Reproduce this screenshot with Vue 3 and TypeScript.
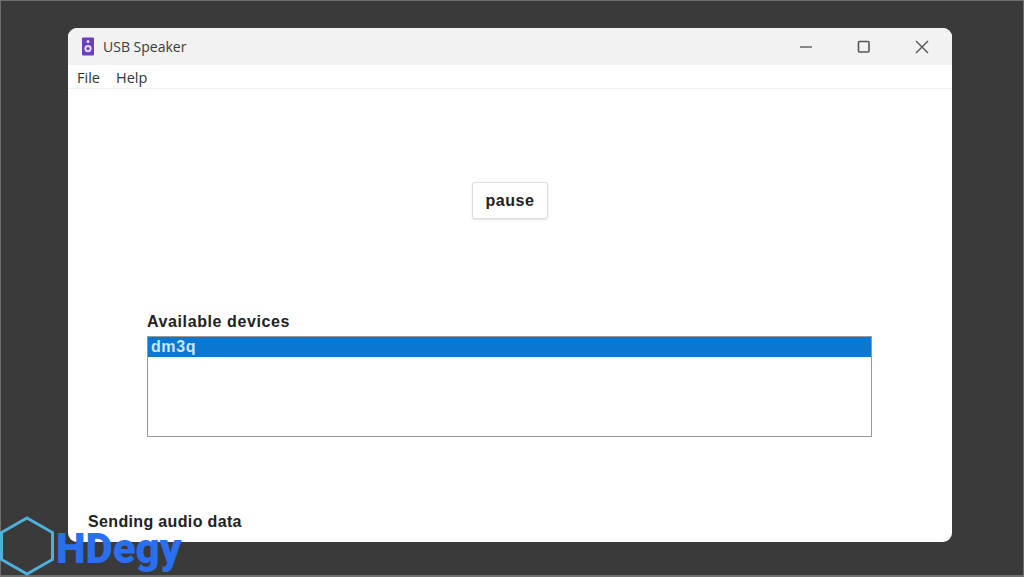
<template>
  <div class="screen">
    <div class="window">
      <header class="title-bar">
        <div class="title-left">
          <svg class="app-icon" width="14" height="19" viewBox="0 0 14 19">
            <rect x="1" y="0.5" width="12" height="18" rx="1" fill="#6a3fc0" />
            <circle cx="7" cy="4.6" r="1.5" fill="#e6dcf8" />
            <circle cx="7" cy="11.6" r="3.6" fill="#e6dcf8" />
            <circle cx="7" cy="11.6" r="1.6" fill="#6a3fc0" />
          </svg>
          <span class="app-name">{{ title }}</span>
        </div>
        <div class="window-controls">
          <svg width="14" height="14" viewBox="0 0 14 14">
            <path d="M1 7H13" stroke="#666" stroke-width="1.3" fill="none" />
          </svg>
          <svg width="14" height="14" viewBox="0 0 14 14">
            <rect x="1.500" y="1.500" width="10.500" height="10.500" rx="1" stroke="#555" stroke-width="1.6" fill="none" />
          </svg>
          <svg width="14" height="14" viewBox="0 0 14 14">
            <path d="M1 1L13 13M13 1L1 13" stroke="#555" stroke-width="1.4" fill="none" />
          </svg>
        </div>
      </header>

      <nav class="menu-bar">
        <span v-for="item in menuItems" :key="item">{{ item }}</span>
      </nav>

      <main class="content">
        <div class="button-row">
          <button class="pause-btn" type="button">pause</button>
        </div>

        <section class="devices">
          <div class="label">Available devices</div>
          <ul class="device-list">
            <li
              v-for="device in devices"
              :key="device"
              :class="{ selected: device === selected }"
            >{{ device }}</li>
          </ul>
        </section>

        <div class="status">{{ status }}</div>
      </main>
    </div>

    <div class="watermark">
      <svg width="56" height="62" viewBox="0 0 56 62">
        <path d="M27 3L52.500 17.500V44.500L27 59L1.500 44.500V17.500Z" fill="none" stroke="#4fb0dc" stroke-width="3" />
      </svg>
      <span class="watermark-text">HDegy</span>
    </div>
  </div>
</template>

<script setup lang="ts">
const title = 'USB Speaker';
const menuItems = ['File', 'Help'];
const devices = ['dm3q'];
const selected = 'dm3q';
const status = 'Sending audio data';
</script>

<style>
html, body { margin: 0; height: 100%; overflow: hidden; }
</style>

<style scoped>
.screen {
  position: relative;
  box-sizing: border-box;
  width: 1024px;
  height: 577px;
  padding: 27px 71px 33px 67px;
  background: #3a3a3a;
  border: 1px solid #6e6e6e;
  border-bottom-width: 2px;
}
.window {
  display: flex;
  flex-direction: column;
  height: 100%;
  background: #fff;
  border-radius: 9px;
  overflow: hidden;
}
.title-bar {
  display: flex;
  justify-content: space-between;
  align-items: center;
  height: 37px;
  flex-shrink: 0;
  background: #f2f2f2;
  padding: 0 23px 0 13px;
}
.title-left {
  display: flex;
  align-items: center;
  gap: 8px;
}
.app-name {
  font: 14px "Open Sans", "Noto Sans", sans-serif;
  color: #3c3c3c;
}
.window-controls {
  display: flex;
  align-items: center;
  gap: 44px;
}
.menu-bar {
  display: flex;
  gap: 16px;
  height: 24px;
  flex-shrink: 0;
  align-items: center;
  box-sizing: border-box;
  padding: 1px 0 0 9px;
  border-bottom: 1px solid #f0f0f0;
  font: 14.500px "Open Sans", "Noto Sans", sans-serif;
  color: #333;
}
.content {
  flex: 1;
  display: flex;
  flex-direction: column;
  font: bold 16px "Liberation Sans", Arial, sans-serif;
  letter-spacing: 0.6px;
  color: #222;
}
.button-row {
  display: flex;
  justify-content: center;
  padding-top: 93px;
}
.pause-btn {
  width: 76px;
  height: 37px;
  background: #fff;
  border: 1px solid #dcdcdc;
  border-radius: 3px;
  box-shadow: 0 1px 2px rgba(0, 0, 0, 0.12);
  font: inherit;
  letter-spacing: 0.6px;
  color: #222;
}
.devices {
  margin: 93px 80px 0 79px;
}
.label {
  height: 24px;
  line-height: 20px;
}
.device-list {
  list-style: none;
  margin: 0;
  padding: 0;
  height: 101px;
  box-sizing: border-box;
  border: 1px solid #999;
  background: #fff;
}
.device-list li {
  height: 20px;
  line-height: 20px;
  padding-left: 3px;
  color: #cfe6f8;
}
.device-list li.selected {
  background: #0a78d0;
}
.status {
  margin: 75px 0 0 20px;
  line-height: 20px;
  letter-spacing: 0.35px;
}
.watermark {
  position: absolute;
  left: -1px;
  bottom: -2px;
  display: flex;
  align-items: center;
  height: 62px;
}
.watermark-text {
  position: relative;
  top: 3px;
  font: 900 42px/26px Roboto, "Liberation Sans", sans-serif;
  color: #2a6ff0;
}
</style>
